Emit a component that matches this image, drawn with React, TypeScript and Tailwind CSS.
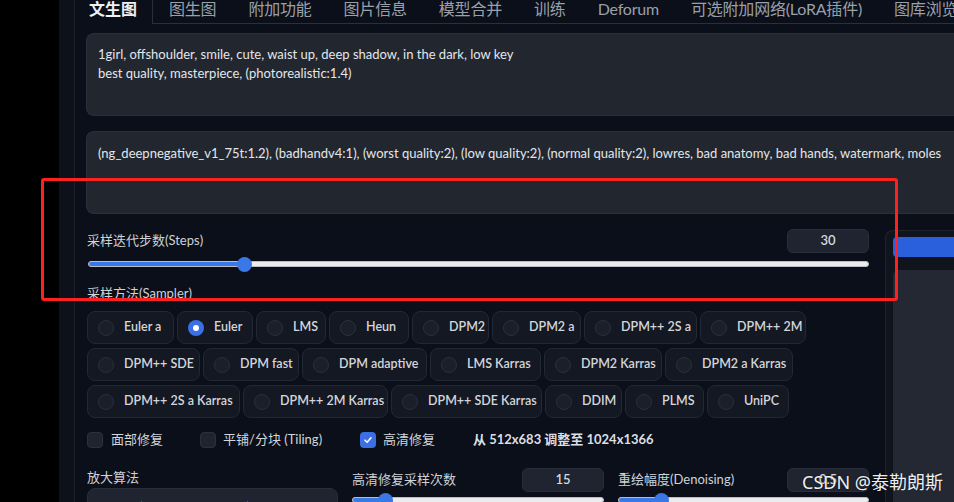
import React from 'react';

const tabs = ['文生图', '图生图', '附加功能', '图片信息', '模型合并', '训练', 'Deforum', '可选附加网络(LoRA插件)', '图库浏览器'];

// sampler chips, widths read off the screenshot
const samplerRows: [string, number][][] = [
  [['Euler a', 87], ['Euler', 76], ['LMS', 70], ['Heun', 80], ['DPM2', 77], ['DPM2 a', 89], ['DPM++ 2S a', 113], ['DPM++ 2M', 106]],
  [['DPM++ SDE', 113], ['DPM fast', 96], ['DPM adaptive', 125], ['LMS Karras', 111], ['DPM2 Karras', 118], ['DPM2 a Karras', 128]],
  [['DPM++ 2S a Karras', 153], ['DPM++ 2M Karras', 145], ['DPM++ SDE Karras', 151], ['DDIM', 77], ['PLMS', 79], ['UniPC', 82]],
];

const Slider: React.FC<{ pct: number }> = ({ pct }) => (
  <div className="relative h-[16px] flex items-center">
    <div className="w-full h-[6px] rounded-full bg-[#ececec] border border-[#b9bcc2] overflow-hidden">
      <div className="h-full bg-[#3b78e7]" style={{ width: `${pct}%` }} />
    </div>
    <div
      className="absolute top-[0.5px] w-[15px] h-[15px] -ml-[7px] rounded-full bg-[#3b78e7]"
      style={{ left: `${pct}%` }}
    />
  </div>
);

const NumberBox: React.FC<{ value: string }> = ({ value }) => (
  <div className="w-[82px] h-[24px] shrink-0 rounded-md bg-[#1f2430] border border-[#282e3a] flex items-center justify-center text-[13px] font-semibold text-[#d6d9de]">
    {value}
  </div>
);

const Checkbox: React.FC<{ checked?: boolean }> = ({ checked }) =>
  checked ? (
    <div className="w-[16px] h-[16px] rounded-[4px] bg-[#3b6fe3] flex items-center justify-center">
      <svg width="10" height="10" viewBox="0 0 10 10" fill="none">
        <path d="M2 5.2 4.1 7.3 8 2.8" stroke="white" strokeWidth="1.6" strokeLinecap="round" strokeLinejoin="round" />
      </svg>
    </div>
  ) : (
    <div className="w-[16px] h-[16px] rounded-[4px] bg-[#1f2430] border border-[#2b313d]" />
  );

const App: React.FC = () => {
  return (
    <div className="relative w-[954px] h-[502px] overflow-hidden bg-black flex font-['Lato','Noto_Sans_CJK_SC',sans-serif]">
      <div className="w-[59px] shrink-0 bg-black" />
      <div className="w-[16px] shrink-0 bg-[#0e1119] border-r border-[#1c202a]" />

      <div className="flex-1 min-w-0 bg-[#0b0f19] flex flex-col">
        {/* tabs */}
        <div className="flex h-[24px] shrink-0 whitespace-nowrap overflow-hidden">
          {tabs.map((t, i) => (
            <div
              key={t}
              className={
                i === 0
                  ? 'w-[78px] shrink-0 pl-[14px] text-[16px] leading-[18px] font-bold text-[#eef0f3] border-r border-[#2a2f3a]'
                  : 'shrink-0 px-4 text-[16px] leading-[18px] text-[#9aa0a9] border-b border-[#2a2f3a] tracking-[-0.2px]'
              }
            >
              {t}
            </div>
          ))}
          <div className="flex-1 border-b border-[#2a2f3a]" />
        </div>

        <div className="pl-[11px] flex flex-col">
          {/* prompt */}
          <div className="mt-[9px] h-[83px] rounded-l-lg bg-[#21262f] border border-[#2a303b] border-r-0 pl-[11px] pt-[11px] text-[13px] leading-[19px] text-[#e4e6ea] whitespace-nowrap overflow-hidden">
            <div>1girl, offshoulder, smile, cute, waist up, deep shadow, in the dark, low key</div>
            <div>best quality, masterpiece, (photorealistic:1.4)</div>
          </div>
          {/* negative prompt */}
          <div className="mt-[15px] h-[83px] rounded-l-lg bg-[#21262f] border border-[#2a303b] border-r-0 pl-[11px] pt-[12px] text-[13px] leading-[19px] text-[#e4e6ea] whitespace-nowrap overflow-hidden">
            (ng_deepnegative_v1_75t:1.2), (badhandv4:1), (worst quality:2), (low quality:2), (normal quality:2), lowres, bad anatomy, bad hands, watermark, moles
          </div>

          <div className="flex mt-[15px]">
            {/* left column */}
            <div className="ml-[1px] w-[782px] shrink-0 flex flex-col">
              <div className="h-[24px] flex items-center justify-between">
                <span className="text-[13px] text-[#cfd2d8]">采样迭代步数(Steps)</span>
                <NumberBox value="30" />
              </div>
              <div className="mt-[3px] pl-[1px]">
                <Slider pct={20} />
              </div>

              <div className="mt-[12px] h-[18px] text-[13px] leading-[18px] text-[#cfd2d8]">采样方法(Sampler)</div>

              <div className="mt-[9px] flex flex-col gap-[4px]">
                {samplerRows.map((row, ri) => (
                  <div key={ri} className="flex gap-[3px]">
                    {row.map(([name, w]) => {
                      const selected = name === 'Euler';
                      return (
                        <div
                          key={name}
                          className="h-[33px] shrink-0 rounded-lg bg-[#131822] border border-[#222834] flex items-center pl-[10px] gap-[10px] text-[12.5px] font-semibold text-[#d3d6db] whitespace-nowrap"
                          style={{ width: w }}
                        >
                          {selected ? (
                            <div className="w-[16px] h-[16px] rounded-full bg-[#3b6fe3] flex items-center justify-center">
                              <div className="w-[6px] h-[6px] rounded-full bg-white" />
                            </div>
                          ) : (
                            <div className="w-[16px] h-[16px] rounded-full bg-[#1a1f29] border border-[#2a303c]" />
                          )}
                          <span>{name}</span>
                        </div>
                      );
                    })}
                  </div>
                ))}
              </div>

              {/* checkboxes */}
              <div className="mt-[13px] h-[18px] flex items-center text-[13px] text-[#d3d6db] whitespace-nowrap">
                <div className="w-[113px] flex items-center gap-[8px]">
                  <Checkbox />
                  <span>面部修复</span>
                </div>
                <div className="w-[160px] flex items-center gap-[7px]">
                  <Checkbox />
                  <span>平铺/分块 (Tiling)</span>
                </div>
                <div className="w-[113px] flex items-center gap-[7px]">
                  <Checkbox checked />
                  <span>高清修复</span>
                </div>
                <span className="font-bold text-[#dcdfe4]">从 512x683 调整至 1024x1366</span>
              </div>

              {/* hires options */}
              <div className="mt-[19px] grid grid-cols-[251px_252px_251px] gap-x-[14px]">
                <div className="flex flex-col">
                  <div className="h-[18px] text-[13px] leading-[18px] text-[#cfd2d8]">放大算法</div>
                  <div className="mt-[2px] h-[40px] rounded-lg bg-[#1f2430] border border-[#282e3a] pl-[11px] pt-[9px] text-[13px] text-[#d6d9de]">
                    Latent (bicubic antialiased)
                  </div>
                </div>
                <div className="flex flex-col">
                  <div className="h-[24px] flex items-center justify-between">
                    <span className="text-[13px] text-[#cfd2d8]">高清修复采样次数</span>
                    <NumberBox value="15" />
                  </div>
                  <Slider pct={13} />
                </div>
                <div className="flex flex-col">
                  <div className="h-[24px] flex items-center justify-between">
                    <span className="text-[13px] text-[#cfd2d8]">重绘幅度(Denoising)</span>
                    <NumberBox value="0.5" />
                  </div>
                  <Slider pct={17} />
                </div>
              </div>
            </div>

            {/* right column */}
            <div className="ml-[16px] mt-[1px] flex-1 h-[300px] rounded-l-lg bg-[#10141d] border border-[#1e232d] border-r-0 pl-[7px] pt-[6px] flex flex-col">
              <div className="h-[20px] rounded-l-sm bg-[#2a60dc]" />
              <div className="mt-[13px] flex-1 rounded-l-md bg-[#232833]" />
            </div>
          </div>
        </div>
      </div>

      {/* red highlight box */}
      <div className="absolute left-[41px] top-[178px] w-[857px] h-[123px] border-[3px] border-[#ff2020] rounded-[3px]" />

      {/* watermark */}
      <div className="absolute left-[802px] top-[470px] text-[18px] leading-[24px] text-[#eceef1] whitespace-nowrap font-['Noto_Sans','Noto_Sans_CJK_SC',sans-serif] [text-shadow:0_0_2px_rgba(0,0,0,0.6)]">
        CSDN @泰勒朗斯
      </div>
    </div>
  );
};

export default App;
